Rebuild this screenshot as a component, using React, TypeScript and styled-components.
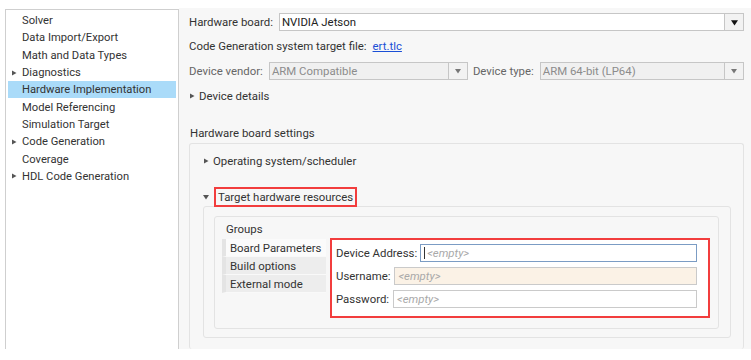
import styled, { createGlobalStyle } from 'styled-components';

const GlobalStyle = createGlobalStyle`
  html, body {
    margin: 0;
    padding: 0;
    background: #ffffff;
  }
  body {
    font-family: Roboto, "Liberation Sans", Arial, sans-serif;
    font-size: 11.4px;
    color: #333333;
  }
`;

const Frame = styled.div`
  display: flex;
  width: 751px;
  height: 349px;
  padding: 8px 0 0 5px;
  box-sizing: border-box;
`;

const Tree = styled.ul`
  list-style: none;
  margin: 1px 0 0 0;
  padding: 2px 2px 0 2px;
  width: 174px;
  flex: none;
  box-sizing: border-box;
  background: #ffffff;
  border: 1px solid #cfcfcf;
  border-bottom: none;
  font-size: 11.2px;
`;

const TreeItem = styled.li<{ $selected?: boolean }>`
  display: flex;
  align-items: center;
  height: 17.3px;
  padding-left: 3px;
  background: ${({ $selected }) => ($selected ? '#aadbf9' : 'transparent')};
  white-space: nowrap;
`;

const ArrowSlot = styled.span`
  display: inline-flex;
  width: 11px;
  flex: none;
  align-items: center;
`;

const Panel = styled.div`
  flex: 1;
  background: #f7f7f7;
  padding: 5px 7px 0 10px;
  display: flex;
  flex-direction: column;
  overflow: hidden;
`;

const Row = styled.div<{ $mt?: number }>`
  display: flex;
  align-items: center;
  height: 18px;
  margin-top: ${({ $mt }) => $mt ?? 0}px;
  white-space: nowrap;
`;

const Label = styled.span<{ $muted?: boolean; $ml?: number; $gap?: number }>`
  color: ${({ $muted }) => ($muted ? '#666666' : '#333333')};
  margin-left: ${({ $ml }) => $ml ?? 0}px;
  margin-right: ${({ $gap }) => $gap ?? 6}px;
`;

const Link = styled.a`
  color: #1a4fd6;
  text-decoration: underline;
`;

const Combo = styled.div<{ $width?: number; $disabled?: boolean }>`
  display: flex;
  ${({ $width }) => ($width ? `width: ${$width}px; flex: none;` : 'flex: 1;')}
  height: 18px;
  box-sizing: border-box;
  border: 1px solid #c6c6c6;
  background: ${({ $disabled }) => ($disabled ? '#f0f0f0' : '#ffffff')};
  color: ${({ $disabled }) => ($disabled ? '#8c8c8c' : '#222222')};
`;

const ComboText = styled.span`
  flex: 1;
  padding-left: 2px;
  line-height: 16px;
`;

const ComboButton = styled.span`
  width: 18px;
  border-left: 1px solid #c6c6c6;
  background: #f2f2f2;
  display: flex;
  align-items: center;
  justify-content: center;
`;

const Disclosure = styled.div<{ $mt?: number }>`
  display: flex;
  align-items: center;
  height: 18px;
  margin-top: ${({ $mt }) => $mt ?? 0}px;
  gap: 4px;
  white-space: nowrap;
`;

const SectionTitle = styled.div`
  margin-top: 19px;
  height: 18px;
  line-height: 18px;
  padding-left: 1px;
`;

const GroupBox = styled.div<{ $pad: string; $mt?: number; $open?: boolean }>`
  border: 1px solid #e3e3e3;
  border-radius: 3px;
  ${({ $open }) => ($open ? 'border-bottom: none; flex: 1;' : '')}
  padding: ${({ $pad }) => $pad};
  margin-top: ${({ $mt }) => $mt ?? 0}px;
  box-sizing: border-box;
  background: #f7f7f7;
`;

const Highlight = styled.span`
  border: 2px solid #f23d3d;
  padding: 1px 2px 1px 2px;
  margin-left: 1px;
`;

const GroupsLabel = styled.div`
  padding-left: 4px;
  height: 18px;
  line-height: 18px;
  margin-top: 3px;
`;

const GroupsBody = styled.div`
  display: flex;
  align-items: flex-start;
  gap: 4px;
`;

const TabList = styled.div`
  width: 104px;
  margin-top: 1px;
  display: flex;
  flex-direction: column;
`;

const Tab = styled.div<{ $active?: boolean }>`
  height: 18px;
  line-height: 18px;
  box-sizing: border-box;
  background: ${({ $active }) => ($active ? '#fbfbfb' : '#ededed')};
  border-left: 4px solid #e4e4e4;
  border-bottom: 1px solid #f9f9f9;
  padding-left: 4px;
  white-space: nowrap;
`;

const FieldsBox = styled.div`
  flex: 1;
  margin-right: 8px;
  border: 2px solid #f23d3d;
  background: #ffffff;
  padding: 4px 11px 8px 4px;
  display: flex;
  flex-direction: column;
  gap: 5px;
`;

const Field = styled.div`
  display: flex;
  align-items: center;
  height: 18px;
  white-space: nowrap;
`;

const Input = styled.div<{ $tone: 'focus' | 'warn' | 'plain' }>`
  flex: 1;
  height: 18px;
  box-sizing: border-box;
  border: 1px solid
    ${({ $tone }) => ($tone === 'focus' ? '#7b9cc4' : '#cacaca')};
  background: ${({ $tone }) => ($tone === 'warn' ? '#fbf2e6' : '#ffffff')};
  padding-left: 3px;
  line-height: 16px;
  color: #a9a9a9;
  font-style: italic;
  display: flex;
  align-items: center;
`;

const Caret = styled.span`
  width: 1px;
  height: 12px;
  background: #333333;
  margin-right: 2px;
`;

const Triangle = ({ dir, color = '#555555', size = 6 }: { dir: 'right' | 'down'; color?: string; size?: number }) => (
  <svg width={size} height={size} viewBox="0 0 6 6">
    {dir === 'right' ? <path d="M1 0.5 L5.5 3 L1 5.5 Z" fill={color} /> : <path d="M0 1 L6 1 L3 5.5 Z" fill={color} />}
  </svg>
);

const treeItems: { label: string; expandable?: boolean; selected?: boolean }[] = [
  { label: 'Solver' },
  { label: 'Data Import/Export' },
  { label: 'Math and Data Types' },
  { label: 'Diagnostics', expandable: true },
  { label: 'Hardware Implementation', selected: true },
  { label: 'Model Referencing' },
  { label: 'Simulation Target' },
  { label: 'Code Generation', expandable: true },
  { label: 'Coverage' },
  { label: 'HDL Code Generation', expandable: true },
];

export default function App() {
  return (
    <>
      <GlobalStyle />
      <Frame>
        <Tree>
          {treeItems.map((item) => (
            <TreeItem key={item.label} $selected={item.selected}>
              <ArrowSlot>{item.expandable && <Triangle dir="right" />}</ArrowSlot>
              {item.label}
            </TreeItem>
          ))}
        </Tree>
        <Panel>
          <Row>
            <Label>Hardware board:</Label>
            <Combo>
              <ComboText>NVIDIA Jetson</ComboText>
              <ComboButton>
                <Triangle dir="down" color="#111111" size={7} />
              </ComboButton>
            </Combo>
          </Row>
          <Row $mt={6}>
            <Label>Code Generation system target file:</Label>
            <Link href="#">ert.tlc</Link>
          </Row>
          <Row $mt={7}>
            <Label $muted>Device vendor:</Label>
            <Combo $width={199} $disabled>
              <ComboText>ARM Compatible</ComboText>
              <ComboButton>
                <Triangle dir="down" color="#777777" size={6} />
              </ComboButton>
            </Combo>
            <Label $muted $ml={5}>Device type:</Label>
            <Combo $disabled>
              <ComboText>ARM 64-bit (LP64)</ComboText>
              <ComboButton>
                <Triangle dir="down" color="#777777" size={6} />
              </ComboButton>
            </Combo>
          </Row>
          <Disclosure $mt={7}>
            <Triangle dir="right" />
            Device details
          </Disclosure>
          <SectionTitle>Hardware board settings</SectionTitle>
          <GroupBox $pad="8px 12px 0 13px" $mt={1} $open>
            <Disclosure>
              <Triangle dir="right" />
              Operating system/scheduler
            </Disclosure>
            <Disclosure $mt={18}>
              <Triangle dir="down" />
              <Highlight>Target hardware resources</Highlight>
            </Disclosure>
            <GroupBox $pad="9px 11px 8px 10px" $mt={0}>
              <GroupBox $pad="0 0 10px 7px">
                <GroupsLabel>Groups</GroupsLabel>
                <GroupsBody>
                  <TabList>
                    <Tab $active>Board Parameters</Tab>
                    <Tab>Build options</Tab>
                    <Tab>External mode</Tab>
                  </TabList>
                  <FieldsBox>
                    <Field>
                      <Label $gap={3}>Device Address:</Label>
                      <Input $tone="focus">
                        <Caret />
                        &lt;empty&gt;
                      </Input>
                    </Field>
                    <Field>
                      <Label $gap={4}>Username:</Label>
                      <Input $tone="warn">&lt;empty&gt;</Input>
                    </Field>
                    <Field>
                      <Label $gap={4}>Password:</Label>
                      <Input $tone="plain">&lt;empty&gt;</Input>
                    </Field>
                  </FieldsBox>
                </GroupsBody>
              </GroupBox>
            </GroupBox>
          </GroupBox>
        </Panel>
      </Frame>
    </>
  );
}
